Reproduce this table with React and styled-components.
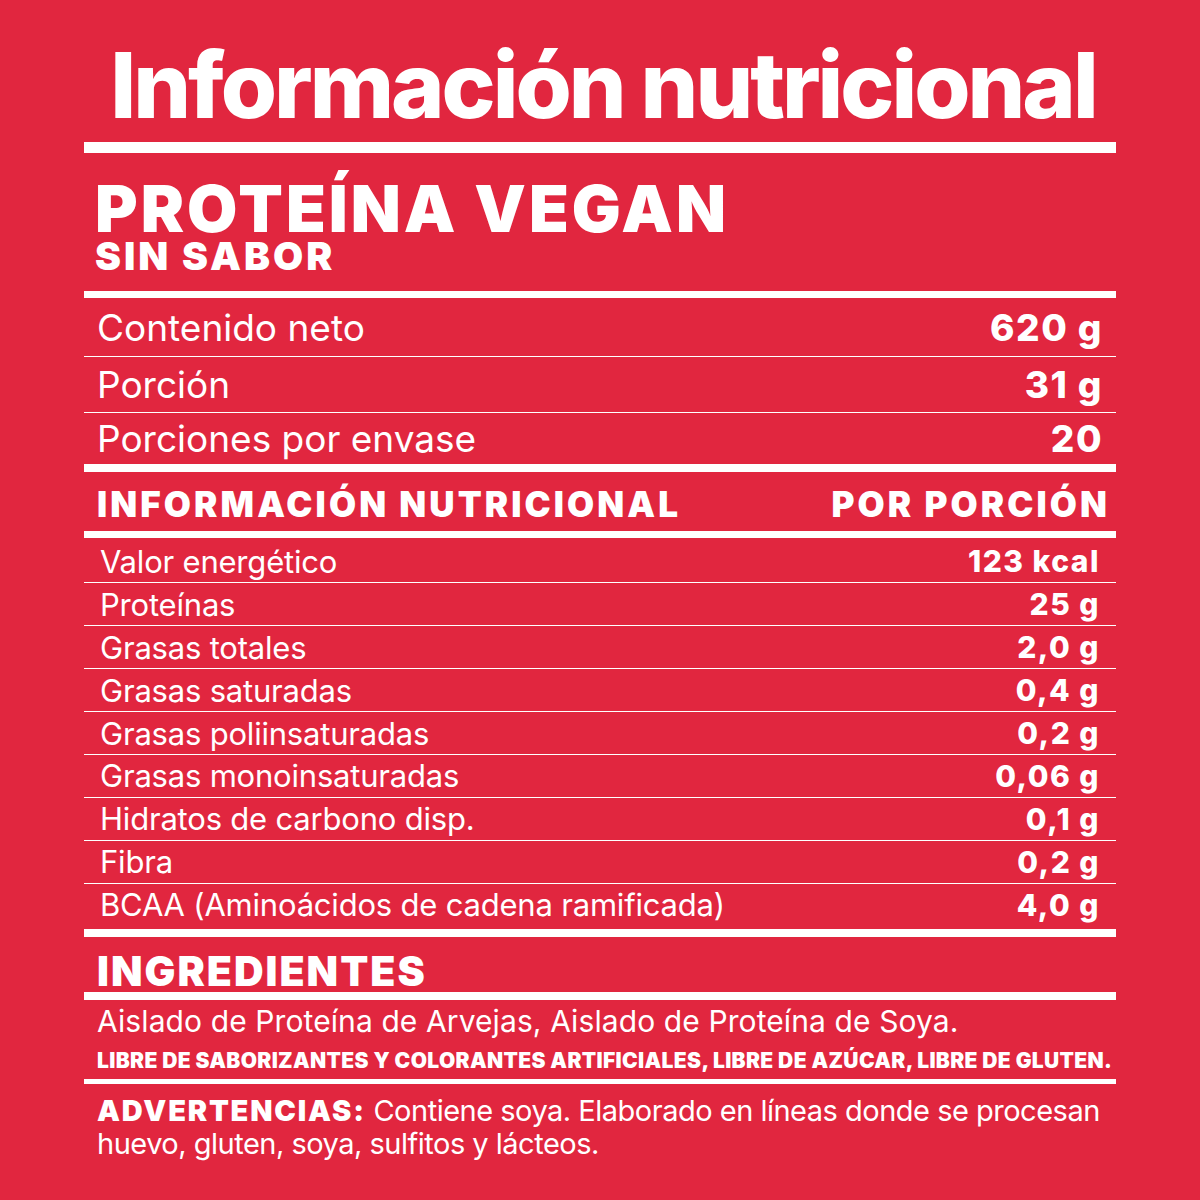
import React from 'react';
import styled, { createGlobalStyle } from 'styled-components';

const RED = '#e1263f';

const GlobalStyle = createGlobalStyle`
  html, body { margin: 0; padding: 0; background: ${RED}; }
  body { font-family: Inter, "Liberation Sans", sans-serif; color: #fff; }
`;

const Page = styled.div`
  width: 1200px;
  height: 1200px;
  box-sizing: border-box;
  background: ${RED};
  padding: 0 84px;
  display: flex;
  flex-direction: column;
`;

const Title = styled.h1`
  margin: 0 -84px;
  height: 142px;
  box-sizing: border-box;
  padding: 40px 0 0 6px;
  text-align: center;
  font-size: 91px;
  line-height: 1;
  font-weight: 800;
  letter-spacing: -3px;
`;

const Rule = styled.div`
  height: ${p => p.$h}px;
  background: #fff;
  flex: none;
`;

const Product = styled.div`
  height: 138px;
  box-sizing: border-box;
  padding: 23px 0 0 11px;
`;

const ProductName = styled.div`
  font-size: 65px;
  line-height: 65px;
  font-weight: 900;
  letter-spacing: 3px;
`;

const Flavor = styled.div`
  font-size: 39px;
  line-height: 30px;
  font-weight: 900;
  letter-spacing: 3px;
`;

const Row = styled.div`
  height: ${p => (p.$h ? `${p.$h}px` : 'auto')};
  flex: ${p => (p.$h ? 'none' : '1')};
  display: flex;
  align-items: center;
  justify-content: space-between;
  padding: 0 ${p => p.$right}px 0 ${p => p.$left}px;
  border-bottom: ${p => (p.$last ? 'none' : '1.5px solid #fff')};
`;

const Label = styled.span`
  font-size: ${p => p.$size}px;
  font-weight: 400;
  letter-spacing: ${p => p.$ls || 0}px;
`;

const Value = styled.span`
  font-size: ${p => p.$size}px;
  font-weight: 800;
  letter-spacing: 1.5px;
`;

const Header = styled.div`
  height: 59px;
  box-sizing: border-box;
  padding: 5px 6px 0 13px;
  display: flex;
  align-items: center;
  justify-content: space-between;
  font-size: 35px;
  font-weight: 900;
  letter-spacing: 3.1px;
`;

const Nutrients = styled.div`
  height: 391px;
  box-sizing: border-box;
  padding: 3px 0;
  display: flex;
  flex-direction: column;
`;

const Section = styled.div`
  height: ${p => p.$h}px;
  box-sizing: border-box;
  padding: ${p => p.$pad};
`;

const BigLabel = styled.div`
  font-size: 41px;
  line-height: 1;
  font-weight: 900;
  letter-spacing: 2px;
`;

const Body = styled.div`
  font-size: 30px;
  line-height: 34px;
  letter-spacing: 0.1px;
`;

const Notice = styled.div`
  margin-top: 12px;
  font-size: 21px;
  line-height: 1;
  font-weight: 900;
  letter-spacing: 0.35px;
  white-space: nowrap;
`;

const Warn = styled.div`
  font-size: 29px;
  line-height: 33px;
  letter-spacing: -0.5px;
  white-space: nowrap;
  b { font-weight: 900; letter-spacing: 1.8px; }
`;

const top = [
  ['Contenido neto', '620 g', 58],
  ['Porción', '31 g', 54.5],
  ['Porciones por envase', '20', 51],
];

const nutrients = [
  ['Valor energético', '123 kcal'],
  ['Proteínas', '25 g'],
  ['Grasas totales', '2,0 g'],
  ['Grasas saturadas', '0,4 g'],
  ['Grasas poliinsaturadas', '0,2 g'],
  ['Grasas monoinsaturadas', '0,06 g'],
  ['Hidratos de carbono disp.', '0,1 g'],
  ['Fibra', '0,2 g'],
  ['BCAA (Aminoácidos de cadena ramificada)', '4,0 g'],
];

export default function App() {
  return (
    <Page>
      <GlobalStyle />
      <Title>Información nutricional</Title>
      <Rule $h={11} />
      <Product>
        <ProductName>PROTEÍNA VEGAN</ProductName>
        <Flavor>SIN SABOR</Flavor>
      </Product>
      <Rule $h={7} />
      {top.map(([l, v, h], i) => (
        <Row key={l} $h={h} $left={13} $right={13} $last={i === top.length - 1}>
          <Label $size={37}>{l}</Label>
          <Value $size={37}>{v}</Value>
        </Row>
      ))}
      <Rule $h={8} />
      <Header>
        <span>INFORMACIÓN NUTRICIONAL</span>
        <span>POR PORCIÓN</span>
      </Header>
      <Rule $h={7} />
      <Nutrients>
        {nutrients.map(([l, v], i) => (
          <Row key={l} $left={16} $right={16} $last={i === nutrients.length - 1}>
            <Label $size={31} $ls={-0.2}>{l}</Label>
            <Value $size={30}>{v}</Value>
          </Row>
        ))}
      </Nutrients>
      <Rule $h={8} />
      <Section $h={55} $pad="14px 0 0 13px">
        <BigLabel>INGREDIENTES</BigLabel>
      </Section>
      <Rule $h={8} />
      <Section $h={79} $pad="4px 0 0 13px">
        <Body>Aislado de Proteína de Arvejas, Aislado de Proteína de Soya.</Body>
        <Notice>LIBRE DE SABORIZANTES Y COLORANTES ARTIFICIALES, LIBRE DE AZÚCAR, LIBRE DE GLUTEN.</Notice>
      </Section>
      <Rule $h={5} />
      <Section $h={90} $pad="10px 0 0 13px">
        <Warn>
          <b>ADVERTENCIAS:</b> Contiene soya. Elaborado en líneas donde se procesan
          <br />
          huevo, gluten, soya, sulfitos y lácteos.
        </Warn>
      </Section>
    </Page>
  );
}
